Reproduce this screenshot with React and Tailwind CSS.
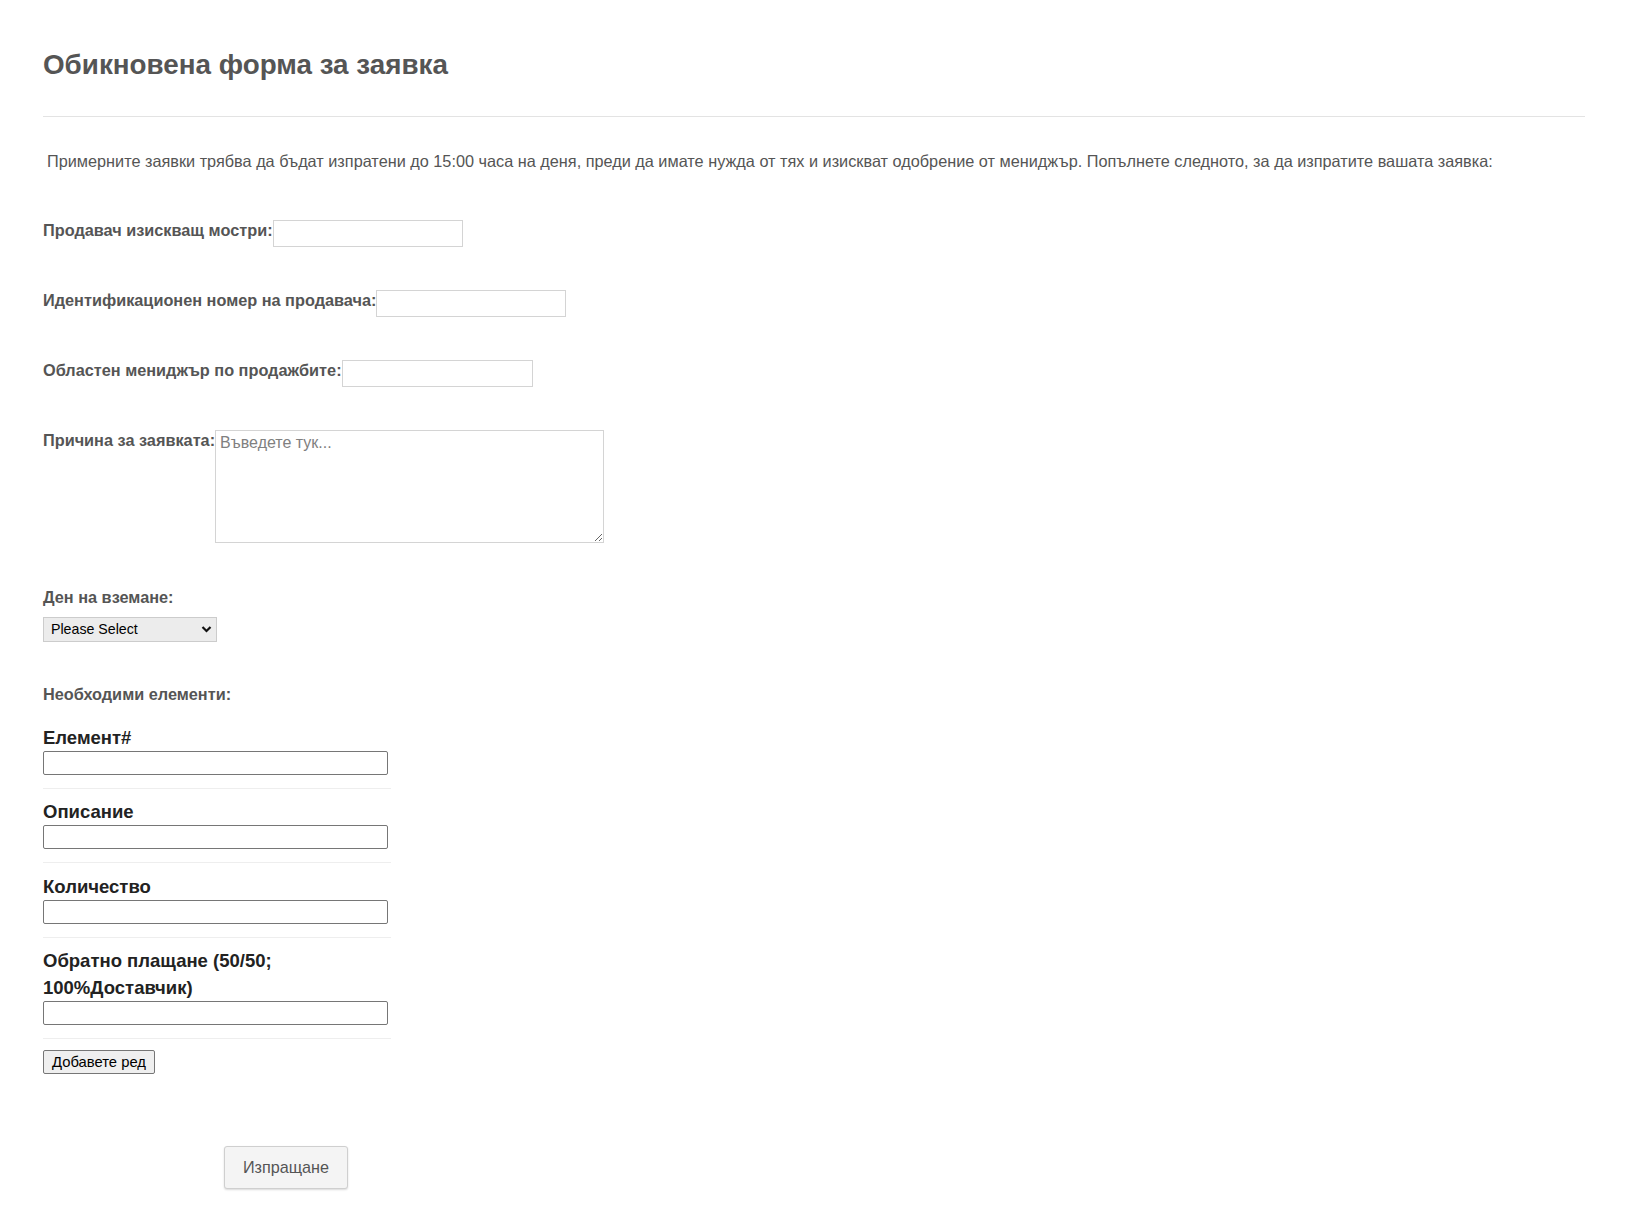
import React from "react";

const font = { fontFamily: '"Liberation Sans", Arial, sans-serif' };

function Field({ label, children }) {
  return (
    <div className="flex items-start">
      <label className="text-[16.3px] font-bold leading-[19px] pt-[1px] text-[#555]">{label}</label>
      {children}
    </div>
  );
}

function TextInput({ w }) {
  return (
    <input
      type="text"
      className={`h-[27px] border border-[#d4d4d4] bg-white outline-none ${w}`}
    />
  );
}

function ItemRow({ label, pt = "pt-[10px]" }) {
  return (
    <div className={`${pt} pb-[13px] border-b border-[#eeeeee]`}>
      <div className="text-[18.5px] font-bold leading-[27px] text-[#222]">{label}</div>
      <input
        type="text"
        className="w-[345px] h-[24px] border border-[#767676] rounded-[2px] bg-white outline-none"
      />
    </div>
  );
}

export default function App() {
  return (
    <div className="min-h-screen bg-white px-[43px] pt-[49px] pb-[42px]" style={font}>
      <h1 className="text-[27.8px] font-bold leading-[32px] text-[#555]">Обикновена форма за заявка</h1>
      <div className="mt-[35px] border-t border-[#e3e3e3]" />
      <p className="mt-[34px] pl-[4px] text-[16.27px] leading-[20px] text-[#555]">
        Примерните заявки трябва да бъдат изпратени до 15:00 часа на деня, преди да имате нужда от тях и изискват одобрение от мениджър. Попълнете следното, за да изпратите вашата заявка:
      </p>

      <div className="mt-[49px] flex flex-col gap-[43px]">
        <Field label="Продавач изискващ мостри:">
          <TextInput w="w-[190px]" />
        </Field>
        <Field label="Идентификационен номер на продавача:">
          <TextInput w="w-[190px]" />
        </Field>
        <Field label="Областен мениджър по продажбите:">
          <TextInput w="w-[191px]" />
        </Field>
        <Field label="Причина за заявката:">
          <textarea
            placeholder="Въведете тук..."
            className="w-[389px] h-[113px] border border-[#d4d4d4] px-[4px] py-[2px] text-[16px] leading-[20px] text-[#333] placeholder:text-[#808080] outline-none"
            style={font}
          />
        </Field>
      </div>

      <div className="mt-[45px]">
        <div className="text-[16.3px] font-bold leading-[19px] text-[#555]">Ден на вземане:</div>
        <div className="relative mt-[10px] w-[174px] h-[25px]">
          <select
            className="appearance-none w-full h-full border border-[#cccccc] bg-[#ececec] pl-[7px] text-[14.2px] text-black outline-none"
            style={font}
            defaultValue=""
          >
            <option value="">Please Select</option>
          </select>
          <svg
            className="pointer-events-none absolute right-[5px] top-[8px]"
            width="11"
            height="9"
            viewBox="0 0 11 9"
          >
            <path d="M1.5 2 L5.5 6 L9.5 2" fill="none" stroke="#111" strokeWidth="2.2" />
          </svg>
        </div>
      </div>

      <div className="mt-[43px] text-[16.3px] font-bold leading-[19px] text-[#555]">Необходими елементи:</div>

      <div className="mt-[10px] w-[348px]">
        <ItemRow label="Елемент#" />
        <ItemRow label="Описание" pt="pt-[9px]" />
        <ItemRow label="Количество" />
        <ItemRow
          pt="pt-[9px]"
          label={
            <>
              Обратно плащане (50/50;
              <br />
              100%Доставчик)
            </>
          }
        />
      </div>

      <button
        type="button"
        className="mt-[11px] h-[24px] px-[8px] border border-[#767676] rounded-[2px] bg-[#efefef] text-[14.8px] text-black"
        style={font}
      >
        Добавете ред
      </button>

      <div className="mt-[72px] pl-[181px]">
        <button
          type="button"
          className="w-[124px] h-[43px] border border-[#cfcfcf] rounded-[3px] bg-[#f4f4f4] text-[16.2px] text-[#555] shadow-[0_1px_2px_rgba(0,0,0,0.15)]"
          style={font}
        >
          Изпращане
        </button>
      </div>
    </div>
  );
}
